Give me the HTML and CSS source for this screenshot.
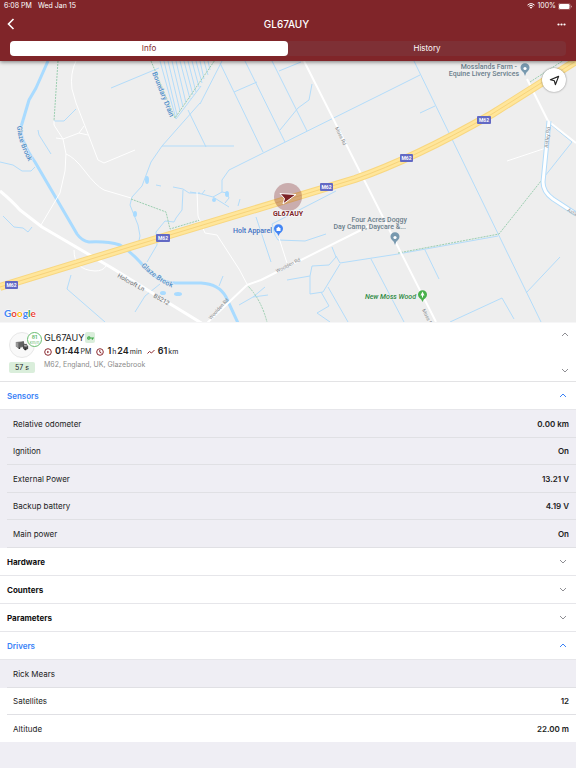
FILE: index.html
```html
<!DOCTYPE html>
<html lang="en">
<head>
    <meta charset="UTF-8">
    <meta name="viewport" content="width=device-width, initial-scale=1.0">
    <title>GL67AUY</title>
    <link rel="stylesheet" href="styles.css">
</head>
<body>

<header class="header">
    <div class="status-bar">
        <span>6:08 PM</span>
        <span>Wed Jan 15</span>
        <span class="status-right">
            <svg class="wifi" viewBox="0 0 16 12"><path d="M1 4.2a10 10 0 0 1 14 0M3.400 6.800a6.500 6.500 0 0 1 9.200 0" fill="none" stroke="#fff" stroke-width="2"/><path d="M8 11.500 5.200 8.700a4 4 0 0 1 5.600 0z" fill="#fff"/></svg>
            100%
            <svg class="battery" viewBox="0 0 28 14"><rect x=".5" y=".5" width="24" height="13" rx="4" fill="none" stroke="#c99a9c"/><rect x="2" y="2" width="21" height="10" rx="2.500" fill="#fff"/><path d="M26 5v4q2-.5 2-2t-2-2" fill="#c99a9c"/></svg>
        </span>
    </div>
    <div class="title-bar">
        <button class="icon-button" aria-label="Back">
            <svg class="back" viewBox="0 0 8 12"><path d="M6.500 1 1.500 6l5 5" fill="none" stroke="#fff" stroke-width="1.600"/></svg>
        </button>
        <h1>GL67AUY</h1>
        <button class="icon-button more" aria-label="More">
            <svg class="dots" viewBox="0 0 9 3"><circle cx="1.500" cy="1.500" r="1.100"/><circle cx="4.500" cy="1.500" r="1.100"/><circle cx="7.500" cy="1.500" r="1.100"/></svg>
        </button>
    </div>
    <div class="tabs">
        <button class="tab active">Info</button>
        <button class="tab">History</button>
    </div>
</header>

<main>
    <section class="map">
        <svg class="map-canvas" viewBox="0 61 576 261" preserveAspectRatio="xMidYMid slice">
            <rect y="61" width="576" height="261" fill="#eee"/>

            <!-- water -->
            <g class="stream">
                <path d="M0 162l13 3 9 6 9 0 4-4M3 216l11 11 9 1 5 4 4-5M38 130l1 5 12 19M54 121l10 0 12-12M111 88l48-20M71 275l-4 14 38 33"/>
                <path d="M200 103l-38 43-11 16-9 24-10 11-2 8 8 20 2 11-2 9M162 146h72M188 110l18 37"/>
                <path d="M173 187l10 2 6 4h11M183 190l-1 20-6 8-2 4-9-1-9 11 1 13-10 17M156 185l5 1M135 312l10-16 15-12M193 61"/>
                <path d="M160 61l16 58 25-33M164 61l13 54M168 61l12 50M172 61l11 46M176 61l10 42M180 61l10 38M184 61l9 34M188 61l8 31M192 61l7 26M196 61l6 22M200 61l4 18M204 61l4 14M208 61l2 9"/>
                <path d="M222 61l-22 43M220 63l43 89M245 61l40 81M234 92l23-10M272 61l35 70M279 71l22-9"/>
                <path d="M390 90 229 170l-7 10 0 12M280 130l18-22 11-8 3-16M390 90l30-15M414 61l127 261"/>
                <path d="M190 192l12 2 11 3 9-5M213 197l16 10M240 199l-2 7M202 194l3-4M222 192l5 1 2 5-4 5M336 191l-64 33 3 11 3 5 27 1 21-7M256 217l15 45"/>
                <path d="M287 280l23-4 2-10 17-1 7-8-4-10M336 256l4 7 58-9 100-18M310 276l0 18 13-2 17-28M321 292l8 14-12 7 13 9M328 287l20 35M371 259l33 63M425 250l14 29M526 293l34-36M450 322l52-24 12 21"/>
                <path d="M420 113l15-7M550 124l22 18-27 34M239 305l14-8 12-10M253 297l15-2M219 286l4-10"/>
            </g>
            <path class="river" d="M48 61 36 88l-7 12-8 27q-1 14 14 35l42 72q5 7 12 8 18-1 31 3 10 6 20 17 18 22 37 21h24q18 1 25 14l12 26"/>
            <g class="pond"><ellipse cx="147" cy="180" rx="2" ry="4"/><ellipse cx="135" cy="214" rx="2" ry="3"/><ellipse cx="163" cy="293" rx="3" ry="2"/><ellipse cx="178" cy="294" rx="4" ry="2"/><ellipse cx="214" cy="200" rx="2" ry="2"/><ellipse cx="227" cy="194" rx="2" ry="3"/></g>

            <!-- footpaths -->
            <path class="path" d="M58 61l-4 60M131 199l35 13 4 17 30-9M151 61l24 57 40-58M247 285q14 14 20 37M398 253l101-19 42-53M530 82l34-22"/>

            <!-- local roads -->
            <g class="lane">
                <path d="M76 61q-6 12-4 28l4 14 9 23 13 34 6 3 31-13M54 121v4l9 14 3 15-1 17-5 22-19 32M63 139l16-6 9 2M79 133l5-7M56 138l7 1M66 154q8 3 18 16 12 16 20 20l27 8M74 250q0 20 21 21 8 0 11-5M197 192l1 24 7 17 12 2 22 34 8 15M279 238l8 25"/>
            </g>
            <path class="road" d="M304 61l132 261M247 285l14-5 108-54M247 285l-41 39M527 79l21 42 28 22"/>
            <path class="lane" d="M546 148l-39 13"/>
            <path class="road-edge" d="M549 121l-6 61q0 10 10 17l23 15"/>
            <path class="road" d="M549 121l-6 61q0 10 10 17l23 15"/>
            <path class="main-road" d="M0 191q12 10 20 19l22 17 70 41 42 26 49 30"/>

            <!-- motorway -->
            <path class="motorway-edge" d="M0 287 130 247 355 179q58-20 137-65l84-53"/>
            <path class="motorway" d="M0 287 130 247 355 179q58-20 137-65l84-53"/>
            <path class="motorway-line" d="M0 287 130 247 355 179q58-20 137-65l84-53"/>

            <g class="shield">
                <rect x="5" y="281" width="13" height="8"/><text x="11.500" y="287">M62</text>
                <rect x="156" y="234" width="14" height="8"/><text x="163" y="240">M62</text>
                <rect x="320" y="183" width="13" height="8"/><text x="326.500" y="189">M62</text>
                <rect x="400" y="154" width="13" height="8"/><text x="406.500" y="160">M62</text>
                <rect x="477" y="116" width="14" height="8"/><text x="484" y="122">M62</text>
            </g>

            <defs>
                <path id="brook-west" d="M17 126q1 18 14 40"/>
                <path id="brook-south" d="M141 266q16 16 34 23"/>
            </defs>
            <g class="water-label">
                <text><textPath href="#brook-west">Glaze Brook</textPath></text>
                <text><textPath href="#brook-south">Glaze Brook</textPath></text>
                <text transform="translate(152 73) rotate(68)">Boundary Drain</text>
            </g>
            <g class="road-label">
                <text transform="translate(117 277) rotate(29)">Holcroft Ln</text>
                <text transform="translate(153 297) rotate(29)">B5212</text>
            </g>
            <g class="lane-label">
                <text transform="translate(335 128) rotate(64)">Moss Rd</text>
                <text transform="translate(277 273) rotate(-27)">Woolden Rd</text>
                <text transform="translate(211 320) rotate(-48)">Woolden Rd</text>
                <text transform="translate(548 148) rotate(-84)">Astley Rd</text>
                <text transform="translate(567 211) rotate(29)">Astley Rd</text>
                <text transform="translate(422 310) rotate(64)">Moss Rd</text>
            </g>

            <!-- places -->
            <g class="place" text-anchor="end">
                <text x="517" y="69">Mosslands Farm -</text>
                <text x="519" y="76">Equine Livery Services</text>
                <text x="407" y="222">Four Acres Doggy</text>
                <text x="406" y="229">Day Camp, Daycare &amp;...</text>
                <text class="shop" x="272" y="233">Holt Apparel</text>
                <text class="wood" x="416" y="299">New Moss Wood</text>
            </g>
            <g>
                <path fill="#7899af" d="M525 76q-1-4-3-5a4.500 4.500 0 1 1 6 0q-2 1-3 5"/><circle cx="525" cy="68.500" r="1.600" fill="#fff"/>
                <path fill="#7899af" d="M395 245q-1-4-3-5a4.500 4.500 0 1 1 6 0q-2 1-3 5"/><circle cx="395" cy="237.500" r="1.600" fill="#fff"/>
                <path fill="#4285f4" d="M278.500 236q-1-3-3-4a4.500 4.500 0 1 1 6 0q-2 1-3 4"/><path d="M276.500 228h4v3h-4zM277.300 228q1.200-2.500 2.400 0" fill="#fff"/>
                <path fill="#47b04b" d="M422.500 302q-1-3-3-4a4.500 4.500 0 1 1 6 0q-2 1-3 4"/><path d="M422.500 291.500l2 4h-1.500v2h-1v-2h-1.500z" fill="#fff"/>
            </g>

            <!-- vehicle -->
            <circle cx="288" cy="197" r="14" fill="#7f2429" fill-opacity=".32"/>
            <path d="M280 193.500 296 194.500 283 204 284.500 198.500z" fill="#7c2226" stroke="#fff" stroke-width="1" stroke-linejoin="round"/>
            <text class="vehicle-label" x="288" y="216" text-anchor="middle">GL67AUY</text>

            <text class="google" x="4" y="317"><tspan fill="#4285f4">G</tspan><tspan fill="#ea4335">o</tspan><tspan fill="#fbbc05">o</tspan><tspan fill="#4285f4">g</tspan><tspan fill="#34a853">l</tspan><tspan fill="#ea4335">e</tspan></text>
        </svg>
        <button class="locate" aria-label="Follow vehicle">
            <svg viewBox="0 0 12 12"><path d="M10.500 1.500 7 10.500 5.800 6.300 1.500 5.200z" fill="none" stroke="#222" stroke-width="1.300" stroke-linejoin="round"/></svg>
        </button>
    </section>

    <section class="vehicle">
        <div class="vehicle-side">
            <div class="avatar">
                <svg class="truck" viewBox="0 0 16 12"><path d="M1 2l9-1 1 6-7 2-3-2z" fill="#777"/><path d="M1 2l3 1v6L1 7z" fill="#999"/><path d="M4 3l6-2 1 5-7 2z" fill="#626262"/><path d="M9 5l4-1 2 3v3l-4 1-2-2z" fill="#484848"/><path d="M10 5.500l3-.5 1 2-3 .5z" fill="#aaa"/><circle cx="5" cy="9" r="1" fill="#333"/><circle cx="12" cy="10.500" r="1" fill="#222"/></svg>
                <span class="speed"><b>81</b>km/h</span>
            </div>
            <span class="age">57 s</span>
        </div>
        <div class="vehicle-info">
            <h2>GL67AUY
                <span class="key"><svg viewBox="0 0 8 6"><path d="M2.200 1a2 2 0 1 0 1.800 2.700h1.500V5h1.300V3.700H8V2.300H4A2 2 0 0 0 2.200 1m0 1.300a.7.7 0 1 1 0 1.400.7.7 0 0 1 0-1.400" fill="#3faa48"/></svg></span>
            </h2>
            <div class="trip">
                <span class="stat"><svg viewBox="0 0 8 8"><circle cx="4" cy="4" r="3.300"/><path d="M3.200 2.700v2.600L5.300 4z" fill="#8c2a30" stroke="none"/></svg><b>01:44</b> PM</span>
                <span class="stat"><svg viewBox="0 0 8 8"><circle cx="4" cy="4" r="3.300"/><path d="M3.800 2v2.200l1.700 1"/></svg><b>1</b> h <b>24</b> min</span>
                <span class="stat"><svg viewBox="0 0 8 8"><path d="M.5 5.500 2.500 3.500 4.500 5 7.500 2"/></svg><b>61</b> km</span>
            </div>
            <p class="address">M62, England, UK, Glazebrook</p>
        </div>
        <div class="vehicle-nav">
            <button class="icon-button" aria-label="Previous"><svg class="chevron" viewBox="0 0 8 5"><path d="M1 4l3-3 3 3"/></svg></button>
            <button class="icon-button" aria-label="Next"><svg class="chevron" viewBox="0 0 8 5"><path d="M1 1l3 3 3-3"/></svg></button>
        </div>
    </section>

    <button class="group open">Sensors <svg class="chevron" viewBox="0 0 8 5"><path d="M1 4l3-3 3 3"/></svg></button>
    <dl class="rows shaded">
        <div class="row"><dt>Relative odometer</dt><dd>0.00 km</dd></div>
        <div class="row"><dt>Ignition</dt><dd>On</dd></div>
        <div class="row"><dt>External Power</dt><dd>13.21 V</dd></div>
        <div class="row"><dt>Backup battery</dt><dd>4.19 V</dd></div>
        <div class="row"><dt>Main power</dt><dd>On</dd></div>
    </dl>
    <button class="group">Hardware <svg class="chevron" viewBox="0 0 8 5"><path d="M1 1l3 3 3-3"/></svg></button>
    <button class="group">Counters <svg class="chevron" viewBox="0 0 8 5"><path d="M1 1l3 3 3-3"/></svg></button>
    <button class="group">Parameters <svg class="chevron" viewBox="0 0 8 5"><path d="M1 1l3 3 3-3"/></svg></button>
    <button class="group open">Drivers <svg class="chevron" viewBox="0 0 8 5"><path d="M1 4l3-3 3 3"/></svg></button>
    <ul class="rows shaded">
        <li class="row">Rick Mears</li>
    </ul>
    <dl class="rows last">
        <div class="row"><dt>Satellites</dt><dd>12</dd></div>
        <div class="row"><dt>Altitude</dt><dd>22.00 m</dd></div>
    </dl>
</main>

</body>
</html>
```

FILE: styles.css
```css
* {
    box-sizing: border-box;
}
body {
    margin: 0;
    background-color: #efeef4;
    color: #222;
    font-family: Inter, sans-serif;
    font-size: 8px;
}
h1, h2, p, dl, dd, ul {
    margin: 0;
    padding: 0;
}
svg {
    display: block;
}
button {
    font: inherit;
    color: inherit;
    background: none;
    border: none;
    padding: 0;
    cursor: pointer;
}
.header {
    position: relative;
    z-index: 1;
    background-color: #802529;
    color: #fff;
    padding-bottom: 5px;
    box-shadow: 0 1px 4px rgba(0, 0, 0, 0.5);
}
.status-bar {
    display: flex;
    gap: 6px;
    padding: 0 4px;
    font-size: 7px;
    line-height: 12px;
}
.status-right {
    display: flex;
    align-items: center;
    gap: 2px;
    margin-left: auto;
}
.wifi {
    width: 8px;
    height: 6px;
}
.battery {
    width: 14px;
    height: 7px;
}
.title-bar {
    display: grid;
    grid-template-columns: 1fr auto 1fr;
    align-items: center;
    height: 24px;
    padding: 0 10px 0 7px;
}
.title-bar h1 {
    font-size: 10px;
    font-weight: 500;
}
.more {
    justify-self: end;
}
.back {
    width: 8px;
    height: 12px;
}
.dots {
    width: 9px;
    height: 3px;
    fill: #fff;
}
.tabs {
    display: flex;
    margin: 5px 10px 0;
    border-radius: 4px;
    background-color: #7e3035;
}
.tab {
    flex: 1;
    line-height: 15px;
}
.tab.active {
    background-color: #fff;
    color: #802529;
    border-radius: 4px;
}

/* Map */
.map {
    position: relative;
}
.map-canvas {
    width: 100%;
    height: 261px;
}
.map-canvas path {
    stroke-linejoin: round;
}
.stream, .river, .path, .lane, .road, .road-edge, .main-road,
.motorway, .motorway-edge, .motorway-line {
    fill: none;
}
.stream {
    stroke: #b3dcfa;
    stroke-width: 1;
}
.river {
    stroke: #a9dbff;
    stroke-width: 3;
}
.pond {
    fill: #a9dbff;
}
.path {
    stroke: #9bceb0;
    stroke-width: 1;
    stroke-dasharray: 2 1;
}
.lane {
    stroke: #fff;
    stroke-width: 1;
}
.road {
    stroke: #fff;
    stroke-width: 2;
}
.road-edge {
    stroke: #b3dcfa;
    stroke-width: 5;
}
.road-edge + .road {
    stroke-width: 3;
}
.main-road {
    stroke: #fff;
    stroke-width: 3;
}
.motorway-edge {
    stroke: #f8d781;
    stroke-width: 8;
}
.motorway {
    stroke: #ffe69b;
    stroke-width: 6;
}
.motorway-line {
    stroke: #f7d37b;
    stroke-width: 1;
}
.map text {
    font-family: Roboto, sans-serif;
}
.shield rect {
    fill: #6269c4;
    rx: 1px;
}
.shield text {
    fill: #fff;
    font-size: 5px;
    font-weight: 700;
    text-anchor: middle;
}
.water-label {
    fill: #4d8dc9;
    font-size: 7px;
    font-weight: 500;
}
.road-label {
    fill: #6b6f73;
    font-size: 6px;
}
.lane-label {
    fill: #85898d;
    font-size: 5px;
}
.place, .road-label, .water-label {
    stroke: #eee;
    stroke-width: 1px;
    paint-order: stroke;
}
.place {
    fill: #6b7e8c;
    font-size: 7px;
    font-weight: 500;
}
.shop {
    fill: #4272c4;
}
.wood {
    fill: #2d8a43;
    font-style: italic;
}
.vehicle-label {
    fill: #7c2226;
    font-size: 7px;
    font-weight: 700;
    stroke: #fff;
    stroke-width: 1px;
    paint-order: stroke;
}
.map .google {
    font-family: Lato, sans-serif;
    font-size: 10px;
    font-weight: 700;
    stroke: #fff;
    stroke-width: 1px;
    paint-order: stroke;
}
.locate {
    position: absolute;
    top: 7px;
    right: 10px;
    display: grid;
    place-items: center;
    width: 24px;
    height: 24px;
    border-radius: 50%;
    background-color: #fff;
    box-shadow: 0 0 2px rgba(0, 0, 0, 0.5);
}
.locate svg {
    width: 11px;
    height: 11px;
}

/* Vehicle card */
.vehicle {
    display: flex;
    gap: 9px;
    padding: 9px 7px 8px 9px;
    background-color: #fff;
    border-top: 1px solid #f6f6f7;
    border-bottom: 1px solid #e3e3e5;
}
.vehicle-side {
    display: flex;
    flex-direction: column;
    gap: 4px;
    width: 26px;
}
.avatar {
    position: relative;
    display: grid;
    place-items: center;
    width: 26px;
    height: 26px;
    border: 1px solid #e8e8e8;
    border-radius: 50%;
    background-color: #f9f9f9;
}
.truck {
    width: 14px;
    height: 11px;
}
.speed {
    position: absolute;
    top: -1px;
    left: 17px;
    width: 15px;
    height: 15px;
    padding-top: 1px;
    border: 1px solid #69bd70;
    border-radius: 50%;
    background-color: #fff;
    color: #69bd70;
    font-size: 4px;
    line-height: 5px;
    text-align: center;
}
.speed b {
    display: block;
    font-size: 5px;
    line-height: 6px;
}
.age {
    border-radius: 2px;
    background-color: #daeedb;
    font-size: 7px;
    line-height: 11px;
    text-align: center;
}
.vehicle-info {
    flex: 1;
}
.vehicle-info h2 {
    display: flex;
    align-items: center;
    gap: 1px;
    font-size: 9px;
    font-weight: 400;
    line-height: 11px;
}
.key {
    display: grid;
    place-items: center;
    width: 10px;
    height: 11px;
    border-radius: 2px;
    background-color: #daeedb;
}
.key svg {
    width: 7px;
    height: 6px;
}
.trip {
    display: flex;
    gap: 5px;
    font-size: 7px;
    line-height: 16px;
}
.stat {
    display: flex;
    align-items: baseline;
    gap: 1px;
}
.stat svg {
    align-self: center;
    width: 8px;
    height: 8px;
    margin-right: 2px;
    fill: none;
    stroke: #8c2a30;
}
.stat b {
    font-size: 9px;
    font-weight: 600;
}
.address {
    color: #8b8b8b;
    font-size: 7px;
    line-height: 10px;
}
.vehicle-nav {
    display: flex;
    flex-direction: column;
    justify-content: space-between;
}
.chevron {
    width: 8px;
    height: 5px;
    fill: none;
    stroke: #8e8e93;
    stroke-width: 1;
}

/* Groups */
.group {
    display: flex;
    align-items: center;
    justify-content: space-between;
    width: 100%;
    height: 28px;
    padding: 0 9px 0 7px;
    background-color: #fff;
    border-bottom: 1px solid #e6e6ea;
    color: #111;
    font-weight: 700;
}
.group.open {
    color: #3a82f7;
    font-weight: 600;
}
.group.open .chevron {
    stroke: #3a82f7;
}
.rows {
    padding-left: 7px;
    background-color: #fff;
    list-style: none;
}
.rows.shaded {
    background-color: #efeef4;
}
.row {
    display: flex;
    align-items: center;
    justify-content: space-between;
    height: 28px;
    padding: 0 7px 0 6px;
    border-bottom: 1px solid #e0e0e4;
}
.row:nth-child(even), .last .row {
    height: 27px;
}
.row dd {
    font-weight: 600;
}
.last .row:last-child {
    border-bottom: none;
}
```
